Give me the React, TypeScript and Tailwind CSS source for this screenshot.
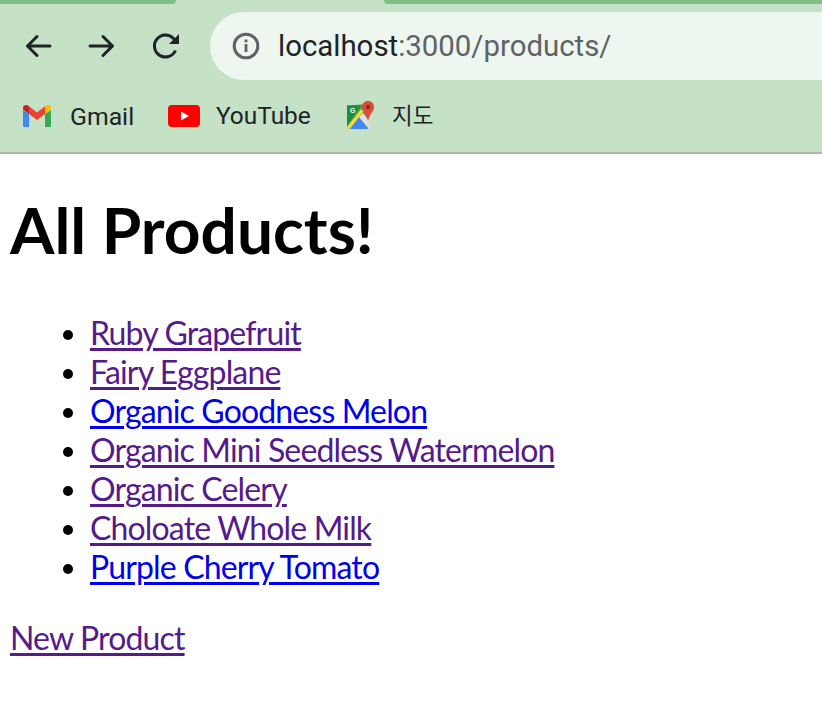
const visited = "text-[#551a8b]";
const blue = "text-[#0000ee]";
const items: [string, string][] = [
  ["Ruby Grapefruit", visited],
  ["Fairy Eggplane", visited],
  ["Organic Goodness Melon", blue],
  ["Organic Mini Seedless Watermelon", visited],
  ["Organic Celery", visited],
  ["Choloate Whole Milk", visited],
  ["Purple Cherry Tomato", blue],
];

function Nav({ d }: { d: string }) {
  return (
    <svg width="32" height="32" viewBox="0 0 32 32" fill="none" stroke="#1f2328" strokeWidth="3" strokeLinecap="round" strokeLinejoin="round">
      <path d={d} />
    </svg>
  );
}

function Gmail() {
  return (
    <svg width="30" height="24" viewBox="0 0 30 24">
      <path d="M1 6v15.500c0 1 .8 1.500 1.500 1.500H7V10z" fill="#4285f4" />
      <path d="M23 10v13h4.500c.7 0 1.500-.5 1.500-1.500V6z" fill="#34a853" />
      <path d="M7 10 1 5.500V4c0-2.500 3-4 5-2.500L7 2.300z" fill="#c5221f" />
      <path d="M23 2.300l1-.8c2-1.500 5-.0 5 2.500v1.500L23 10z" fill="#fbbc04" />
      <path d="M7 2.300 15 8.500l8-6.200V10l-8 6-8-6z" fill="#ea4335" />
    </svg>
  );
}

function YouTube() {
  return (
    <svg width="32" height="22" viewBox="0 0 32 22">
      <rect width="32" height="22" rx="4" fill="#ff0000" />
      <path d="M13 6.500v9l8-4.500z" fill="#fff" />
    </svg>
  );
}

function Maps() {
  return (
    <svg width="30" height="30" viewBox="0 0 30 30">
      <path d="M1 4.500 22 3v24H1z" fill="#34a853" />
      <path d="M1 4.500h14L1 25z" fill="#1e8e3e" />
      <path d="M1 28l11-13 10 13z" fill="#4285f4" />
      <path d="M1 26 15 8l2.500 2.500L3 29H1z" fill="#fdd835" />
      <path d="M13 16l4-4 5 6 2 9h-2z" fill="#e0e0e0" />
      <text x="4" y="12" fontSize="7" fontWeight="700" fill="#fff" fontFamily="Liberation Sans, sans-serif">G</text>
      <path d="M22 0c-3.500 0-6 2.600-6 6 0 4 4 6.500 6 14 2-7.500 6-10 6-14 0-3.400-2.500-6-6-6z" fill="#dd4b39" />
      <circle cx="22" cy="6" r="2.200" fill="#8c2a20" />
    </svg>
  );
}

function Bookmark({ icon, label, w, text }: { icon: React.ReactNode; label: string; w: string; text: string }) {
  return (
    <div className={`flex items-center ${w}`}>
      {icon}
      <span className={`${text} text-[#1f2328] pt-px`}>{label}</span>
    </div>
  );
}

export default function App() {
  return (
    <div className="w-[822px] h-[702px] overflow-hidden bg-white font-['Lato','Noto_Sans_CJK_KR',sans-serif]">
      <header className="h-[154px] bg-[#c5e1c6] border-b-2 border-[#a9bba9] font-['Roboto','Noto_Sans_CJK_KR',sans-serif]">
        <div className="flex justify-between h-1">
          <div className="w-[176px] bg-[#7fbe82] rounded-br-[12px]" />
          <div className="w-[438px] bg-[#7fbe82] rounded-bl-[12px]" />
        </div>
        <div className="flex items-center h-[68px] mt-2 pl-[22px]">
          <div className="flex gap-8">
            <Nav d="M28 16H6M15 6.500 5.500 16l9.500 9.500" />
            <Nav d="M4 16h22M17 6.500l9.500 9.500-9.500 9.500" />
            <svg width="32" height="32" viewBox="0 0 32 32" fill="none">
              <path d="M25.500 20.500A11 11 0 1 1 23.500 8.500L26 11" stroke="#1f2328" strokeWidth="3" />
              <path d="M29 4v10H19z" fill="#1f2328" />
            </svg>
          </div>
          <div className="flex items-center ml-[28px] flex-1 h-[68px] bg-[#edf6ef] rounded-l-[34px] pl-[22px] gap-[18px]">
            <svg width="28" height="28" viewBox="0 0 28 28" fill="none">
              <circle cx="14" cy="14" r="11.800" stroke="#5f6368" strokeWidth="3" />
              <rect x="12.600" y="12" width="2.800" height="8" fill="#5f6368" />
              <rect x="12.600" y="7.500" width="2.800" height="2.800" fill="#5f6368" />
            </svg>
            <div className="text-[29.400px] text-[#1f2328] leading-none pt-px">
              localhost<span className="text-[#5f6368]">:3000/products/</span>
            </div>
          </div>
        </div>
        <div className="flex items-center h-[70px] pl-[22px] pt-[2px]">
          <Bookmark icon={<Gmail />} label="Gmail" text="text-[24.800px]" w="w-[146px] gap-[18px]" />
          <Bookmark icon={<YouTube />} label="YouTube" text="text-[24.400px]" w="w-[178px] gap-4" />
          <Bookmark icon={<Maps />} label="지도" text="text-[22.500px]" w="gap-4" />
        </div>
      </header>
      <main className="pl-[10px]">
        <h1 className="text-[64px] font-bold leading-[76px] text-black pt-[38px]">All Products!</h1>
        <ul className="list-disc pl-[80px] mt-[45px] text-[32px] leading-[39px] tracking-[-0.85px] marker:text-black marker:text-[31px]">
          {items.map(([name, color]) => (
            <li key={name}>
              <a href="#" className={`underline decoration-[3px] underline-offset-[3px] ${color}`}>{name}</a>
            </li>
          ))}
        </ul>
        <p className="mt-8 text-[32px] leading-[39px] tracking-[-0.85px]">
          <a href="#" className={`underline decoration-[3px] underline-offset-[3px] ${visited}`}>New Product</a>
        </p>
      </main>
    </div>
  );
}
